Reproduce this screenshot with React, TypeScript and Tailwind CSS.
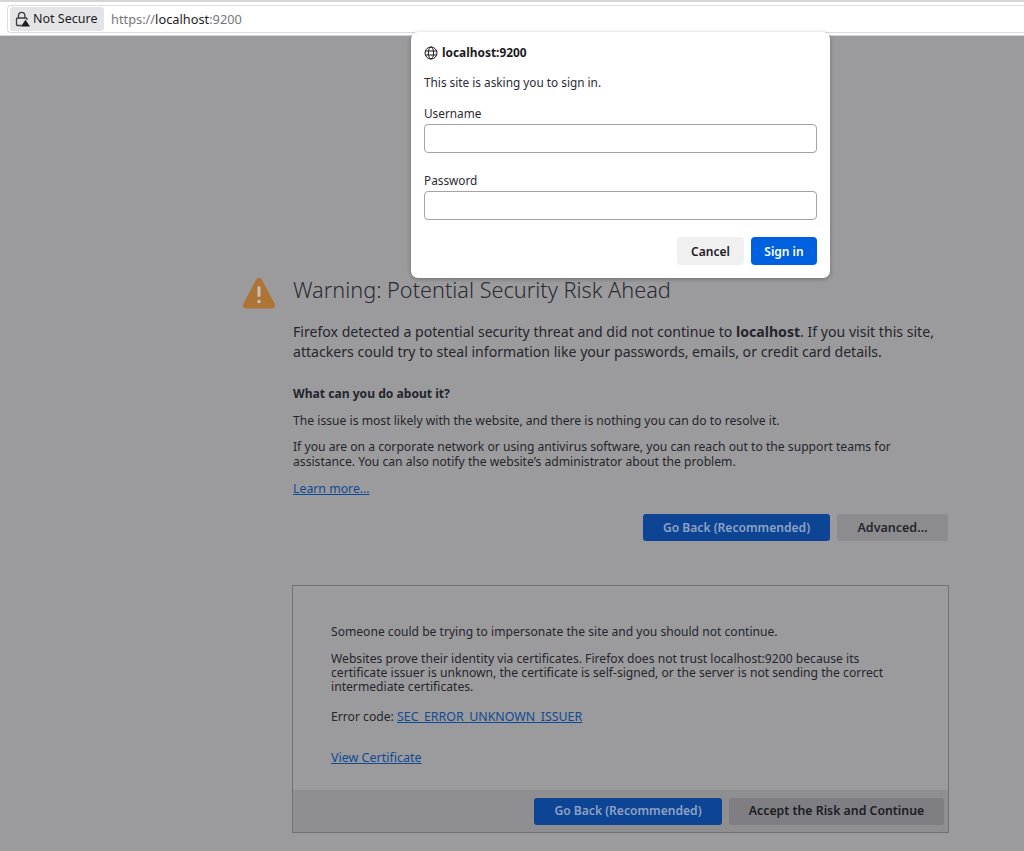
import React from 'react';

const font = { fontFamily: '"Noto Sans", "Open Sans", sans-serif' };

function LockIcon() {
  return (
    <svg width="16" height="16" viewBox="0 0 16 16" fill="none" className="shrink-0">
      <path d="M4.500 7V4.500a3.200 3.200 0 0 1 6.400 0V7" stroke="#3a3a3c" strokeWidth="1.300" />
      <path d="M7.500 14.500H3.500a1 1 0 0 1-1-1V8a1 1 0 0 1 1-1h8.500a1 1 0 0 1 1 1v1" stroke="#3a3a3c" strokeWidth="1.300" />
      <path d="M11.500 8.800 16 15.500H7z" fill="#1c1b22" />
    </svg>
  );
}

function GlobeIcon() {
  return (
    <svg width="14" height="14" viewBox="0 0 14 14" fill="none" stroke="#1c1b22" strokeWidth="1" className="shrink-0">
      <circle cx="7" cy="7" r="6" />
      <ellipse cx="7" cy="7" rx="2.600" ry="6" />
      <path d="M1.200 5h11.600M1.200 9h11.600" />
    </svg>
  );
}

function WarningIcon() {
  return (
    <svg width="34" height="32" viewBox="0 0 34 32" className="shrink-0">
      <path d="M14.200 2.500a3.200 3.200 0 0 1 5.600 0l13 24.500a3 3 0 0 1-2.700 4.500H3.900a3 3 0 0 1-2.700-4.500z" fill="#ad7435" />
      <rect x="15.500" y="9" width="3" height="11" rx="1.500" fill="#c3c0bd" />
      <circle cx="17" cy="24.500" r="1.800" fill="#c3c0bd" />
    </svg>
  );
}

function Field({ label }: { label: string }) {
  return (
    <div className="flex flex-col">
      <label className="text-[11.800px] leading-[17px] text-[#2b2a33]">{label}</label>
      <input className="mt-[2px] h-[29px] w-full rounded-[4px] border border-[#a3a3a8] bg-white" />
    </div>
  );
}

export default function App() {
  return (
    <div className="relative h-[851px] w-[1024px] overflow-hidden bg-[#9b9b9d] text-[#26252c]" style={font}>
      <div className="h-[36px] border-t-2 border-b border-[#d6d6d8] bg-white pl-[7px] pt-[3px]">
        <div className="flex h-[28px] items-center rounded-l-[4px] border border-r-0 border-[#dcdcde] pl-[2px]">
          <div className="flex h-[24px] w-[94px] items-center gap-[3px] rounded-[3px] bg-[#e4e4e6] pl-[4px]">
            <LockIcon />
            <span className="pt-[1px] text-[12.500px] text-[#1c1b22]">Not Secure</span>
          </div>
          <div className="ml-[7px] pt-[1px] text-[12.800px] text-[#77767c]">
            https://<span className="text-[#1c1b22]">localhost</span>:9200
          </div>
        </div>
      </div>

      <div className="ml-[242px] flex w-[706px] gap-[17px] pt-[240px]">
        <div className="pt-[1px]">
          <WarningIcon />
        </div>
        <div className="w-[656px]">
          <h1 className="text-[21.700px] font-light leading-[28px] text-[#2c2b32]">Warning: Potential Security Risk Ahead</h1>
          <p className="mt-[18px] text-[14.100px] leading-[20px]">
            Firefox detected a potential security threat and did not continue to <b>localhost</b>. If you visit this site, attackers could try to steal information like your passwords, emails, or credit card details.
          </p>
          <h2 className="mt-[23px] text-[12.100px] font-bold leading-[17px]">What can you do about it?</h2>
          <p className="mt-[10px] text-[12.150px] leading-[17px]">
            The issue is most likely with the website, and there is nothing you can do to resolve it.
          </p>
          <p className="mt-[10px] text-[12.150px] leading-[15px]">
            If you are on a corporate network or using antivirus software, you can reach out to the support teams for assistance. You can also notify the website&rsquo;s administrator about the problem.
          </p>
          <a className="mt-[11px] block text-[12.300px] leading-[17px] text-[#0f4a94] underline">Learn more…</a>
          <div className="mt-[17px] flex justify-end gap-[7px]">
            <button className="h-[27px] w-[187px] rounded-[3px] bg-[#0d4493] pt-[1px] text-[12.100px] font-semibold text-[#8da3c4]">Go Back (Recommended)</button>
            <button className="h-[27px] w-[111px] rounded-[3px] bg-[#8c8c8e] pt-[1px] text-[12.500px] font-semibold text-[#26252c]">Advanced…</button>
          </div>

          <div className="-mx-[1px] mt-[44px] border border-[#717174]">
            <div className="px-[38px] pt-[38px]">
              <p className="text-[12.100px] leading-[15px]">Someone could be trying to impersonate the site and you should not continue.</p>
              <p className="mt-[13px] text-[12.150px] leading-[14px]">
                Websites prove their identity via certificates. Firefox does not trust localhost:9200 because its certificate issuer is unknown, the certificate is self-signed, or the server is not sending the correct intermediate certificates.
              </p>
              <p className="mt-[15px] text-[12.150px] leading-[15px]">
                Error code: <a className="text-[12.400px] text-[#0f4a94] underline">SEC_ERROR_UNKNOWN_ISSUER</a>
              </p>
              <a className="mt-[26px] block text-[12.500px] leading-[15px] text-[#0f4a94] underline">View Certificate</a>
            </div>
            <div className="mt-[25px] flex h-[42px] items-center justify-end gap-[7px] bg-[#8f8f92] pr-[4px]">
              <button className="h-[27px] w-[188px] rounded-[3px] bg-[#0d4493] pt-[1px] text-[12.100px] font-semibold text-[#8da3c4]">Go Back (Recommended)</button>
              <button className="h-[27px] w-[215px] rounded-[3px] bg-[#7f7f83] pt-[1px] text-[12.300px] font-semibold text-[#1c1b22]">Accept the Risk and Continue</button>
            </div>
          </div>
        </div>
      </div>

      <div className="absolute left-[411px] top-[32px] h-[246px] w-[419px] rounded-[7px] bg-white px-[13px] pt-[13px] shadow-[0_1px_4px_rgba(0,0,0,0.3)]">
        <div className="flex h-[16px] items-center gap-[4px]">
          <GlobeIcon />
          <span className="text-[11.900px] font-bold text-[#1c1b22]">localhost:9200</span>
        </div>
        <p className="mt-[13px] text-[11.800px] leading-[17px] text-[#2b2a33]">This site is asking you to sign in.</p>
        <div className="mt-[14px] flex flex-col gap-[19px]">
          <Field label="Username" />
          <Field label="Password" />
        </div>
        <div className="mt-[17px] flex justify-end gap-[7px]">
          <button className="h-[28px] w-[67px] rounded-[4px] bg-[#f0f0f1] pt-[1px] text-[12px] font-semibold text-[#1c1b22]">Cancel</button>
          <button className="h-[28px] w-[66px] rounded-[4px] bg-[#0061e0] pt-[1px] text-[12px] font-semibold text-white">Sign in</button>
        </div>
      </div>
    </div>
  );
}
